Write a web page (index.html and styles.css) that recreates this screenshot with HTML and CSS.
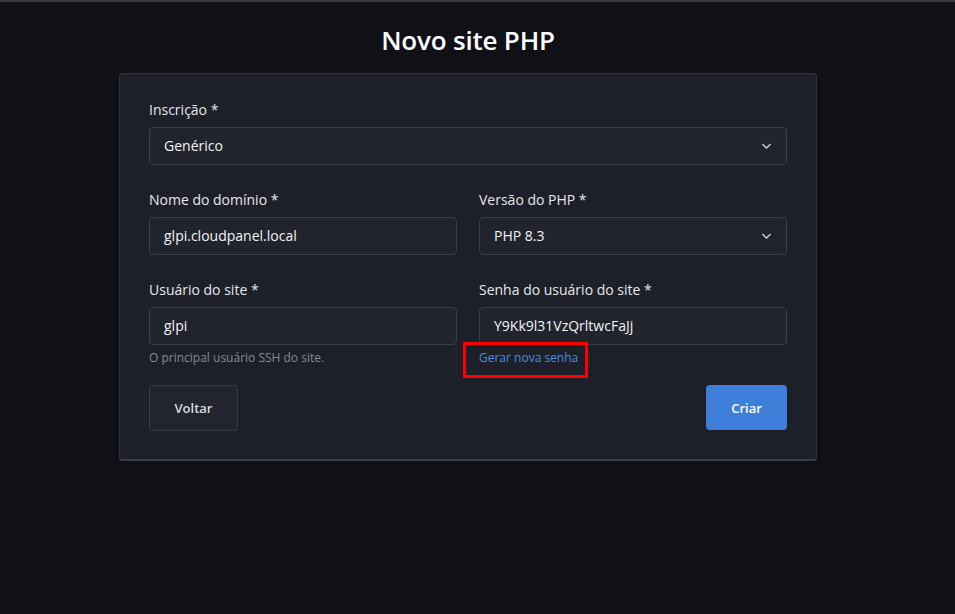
FILE: index.html
```html
<!DOCTYPE html>
<html lang="pt-BR">
<head>
  <meta charset="UTF-8" />
  <meta name="viewport" content="width=device-width, initial-scale=1.0"/>
  <title>Novo site PHP</title>
  <link rel="stylesheet" href="styles.css">
</head>
<body>
  <div class="page">
    <h1>Novo site PHP</h1>
    <form class="card">
      <div class="field">
        <label>Inscrição *</label>
        <div class="select">
          <span>Genérico</span>
          <svg class="chevron" viewBox="0 0 12 8" width="11" height="8"><path d="M1.5 1.8 6 6.2l4.5-4.4" fill="none" stroke="currentColor" stroke-width="1.6"/></svg>
        </div>
      </div>

      <div class="row">
        <div class="field">
          <label>Nome do domínio *</label>
          <div class="input">glpi.cloudpanel.local</div>
        </div>
        <div class="field">
          <label>Versão do PHP *</label>
          <div class="select">
            <span>PHP 8.3</span>
            <svg class="chevron" viewBox="0 0 12 8" width="11" height="8"><path d="M1.5 1.8 6 6.2l4.5-4.4" fill="none" stroke="currentColor" stroke-width="1.6"/></svg>
          </div>
        </div>
      </div>

      <div class="row">
        <div class="field with-help">
          <label>Usuário do site *</label>
          <div class="input">glpi</div>
          <div class="help">O principal usuário SSH do site.</div>
        </div>
        <div class="field with-help">
          <label>Senha do usuário do site *</label>
          <div class="input">Y9Kk9l31VzQrltwcFaJj</div>
          <div class="help">
            <a class="link" href="#">Gerar nova senha</a>
            <span class="highlight"></span>
          </div>
        </div>
      </div>

      <div class="actions">
        <button type="button" class="btn btn-back">Voltar</button>
        <button type="button" class="btn btn-create">Criar</button>
      </div>
    </form>
  </div>
</body>
</html>
```

FILE: styles.css
```css
* {
  box-sizing: border-box;
}

body {
  margin: 0;
  padding-right: 19px;
  font-family: "Open Sans", "Noto Sans", Arial, sans-serif;
  background: #0f1116;
  color: #e8e9ec;
  border-top: 2px solid #3a3c44;
  height: 614px;
}

.page {
  width: 698px;
  margin: 0 auto;
}

h1 {
  margin: 0;
  padding-top: 20px;
  height: 71px;
  text-align: center;
  font-size: 26px;
  font-weight: 600;
  color: #ffffff;
  letter-spacing: -0.2px;
}

.card {
  background: #1e2029;
  border: 1px solid #30323b;
  border-bottom: 2px solid #3b3e48;
  border-radius: 3px;
  padding: 26px 29px 28px;
}

.row {
  display: grid;
  grid-template-columns: 1fr 1fr;
  gap: 22px;
}

.field {
  margin-bottom: 25px;
}

.field label {
  display: block;
  font-size: 14px;
  line-height: 20px;
  margin-bottom: 7px;
  color: #e6e7ea;
}

.input,
.select {
  height: 38px;
  background: #22242d;
  border: 1px solid #3a3c46;
  border-radius: 4px;
  padding: 0 14px;
  font-size: 14px;
  line-height: 36px;
  color: #f2f3f5;
}

.select {
  display: flex;
  justify-content: space-between;
  align-items: center;
}

.chevron {
  color: #c9cbd1;
}

.help {
  position: relative;
  margin-top: 3px;
  font-size: 12px;
  line-height: 20px;
  color: #858994;
  height: 20px;
}

.field.with-help {
  margin-bottom: 17px;
}

.link {
  color: #4b8be0;
  text-decoration: none;
}

.highlight {
  position: absolute;
  left: -16px;
  top: -6px;
  width: 125px;
  height: 36px;
  border: 3px solid #ff0000;
}

.actions {
  display: flex;
  justify-content: space-between;
  align-items: flex-start;
}

.btn {
  font-family: inherit;
  font-size: 13px;
  font-weight: 600;
  border-radius: 4px;
  cursor: pointer;
}

.btn-back {
  width: 89px;
  height: 46px;
  background: #22252e;
  border: 1px solid #3a3d47;
  color: #d8dae0;
}

.btn-create {
  width: 81px;
  height: 45px;
  background: #3f7fd9;
  border: none;
  color: #ffffff;
}
```
